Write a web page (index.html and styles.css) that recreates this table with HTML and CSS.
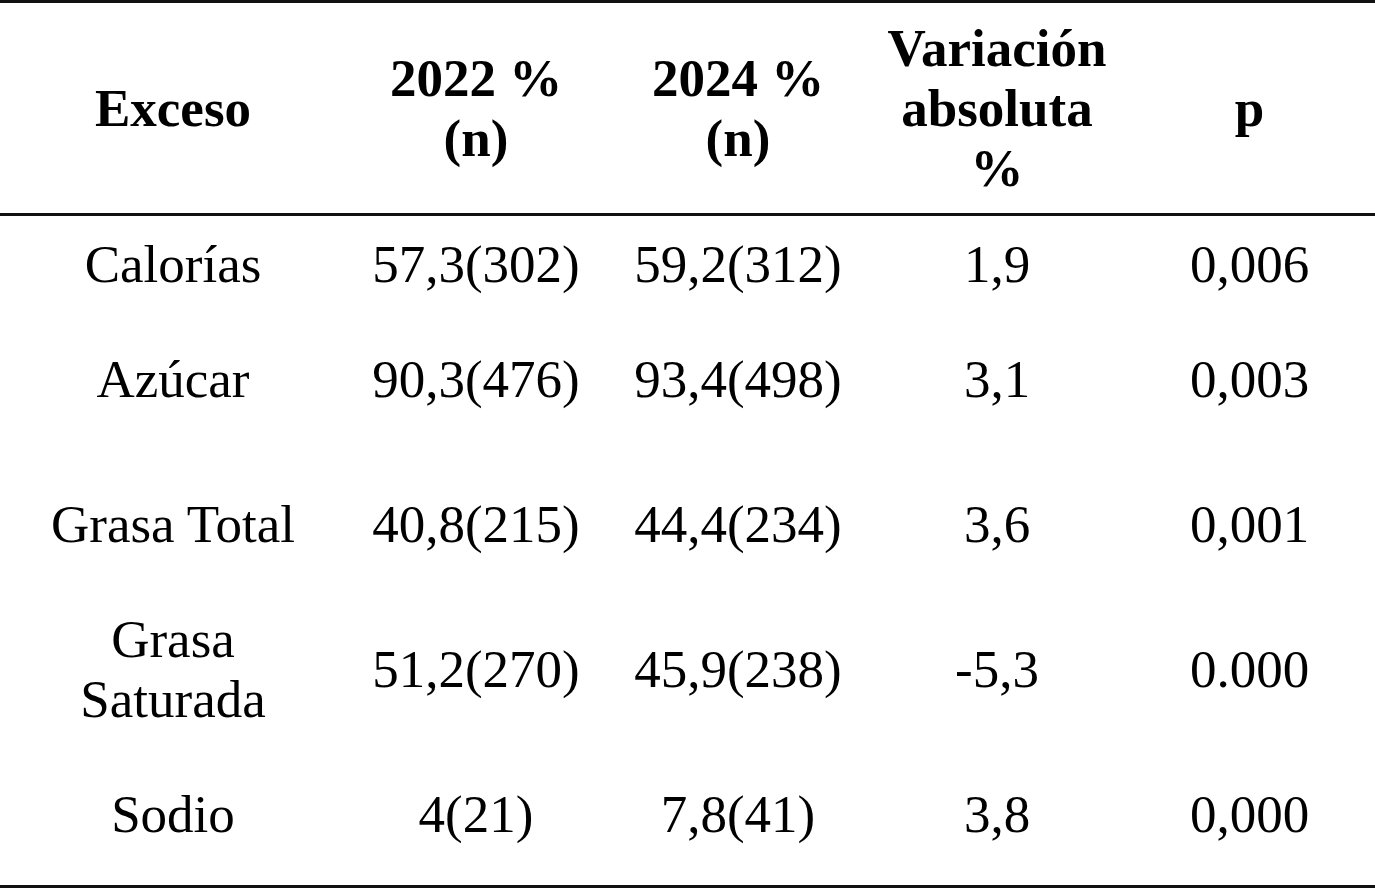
FILE: index.html
```html
<!DOCTYPE html>
<html lang="es">
<head>
<meta charset="utf-8">
<title>Exceso 2022 vs 2024</title>
<link rel="stylesheet" href="styles.css">
</head>
<body>
<table class="data">
  <colgroup>
    <col class="c1"><col class="c2"><col class="c3"><col class="c4"><col class="c5">
  </colgroup>
  <thead>
    <tr>
      <th>Exceso</th>
      <th>2022 %<br>(n)</th>
      <th>2024 %<br>(n)</th>
      <th>Variación<br>absoluta<br>%</th>
      <th>p</th>
    </tr>
  </thead>
  <tbody>
    <tr>
      <td>Calorías</td><td>57,3(302)</td><td>59,2(312)</td><td>1,9</td><td>0,006</td>
    </tr>
    <tr class="tall">
      <td>Azúcar</td><td>90,3(476)</td><td>93,4(498)</td><td>3,1</td><td>0,003</td>
    </tr>
    <tr>
      <td>Grasa Total</td><td>40,8(215)</td><td>44,4(234)</td><td>3,6</td><td>0,001</td>
    </tr>
    <tr>
      <td>Grasa<br>Saturada</td><td>51,2(270)</td><td>45,9(238)</td><td>-5,3</td><td>0.000</td>
    </tr>
    <tr class="last">
      <td>Sodio</td><td>4(21)</td><td>7,8(41)</td><td>3,8</td><td>0,000</td>
    </tr>
  </tbody>
</table>
</body>
</html>
```

FILE: styles.css
```css
html, body {
  margin: 0;
  padding: 0;
  background: #ffffff;
}

.data {
  width: 1375px;
  border-collapse: collapse;
  table-layout: fixed;
  font-family: "Liberation Serif", "Times New Roman", serif;
  font-size: 53px;
  line-height: 60px;
  color: #000000;
  border-top: 3px solid #111111;
  border-bottom: 3px solid #111111;
}

.c1 { width: 346px; }
.c2 { width: 260px; }
.c3 { width: 264px; }
.c4 { width: 254px; }
.c5 { width: 251px; }

.data th {
  height: 210px;
  padding: 0 4px;
  font-weight: bold;
  text-align: center;
  vertical-align: middle;
  border-bottom: 3px solid #111111;
}

.data td {
  padding: 18px 4px 37px;
  font-weight: normal;
  text-align: center;
  vertical-align: middle;
}

.data tr.tall td {
  padding-bottom: 67px;
}

.data tr.last td {
  padding-bottom: 41px;
}
```
